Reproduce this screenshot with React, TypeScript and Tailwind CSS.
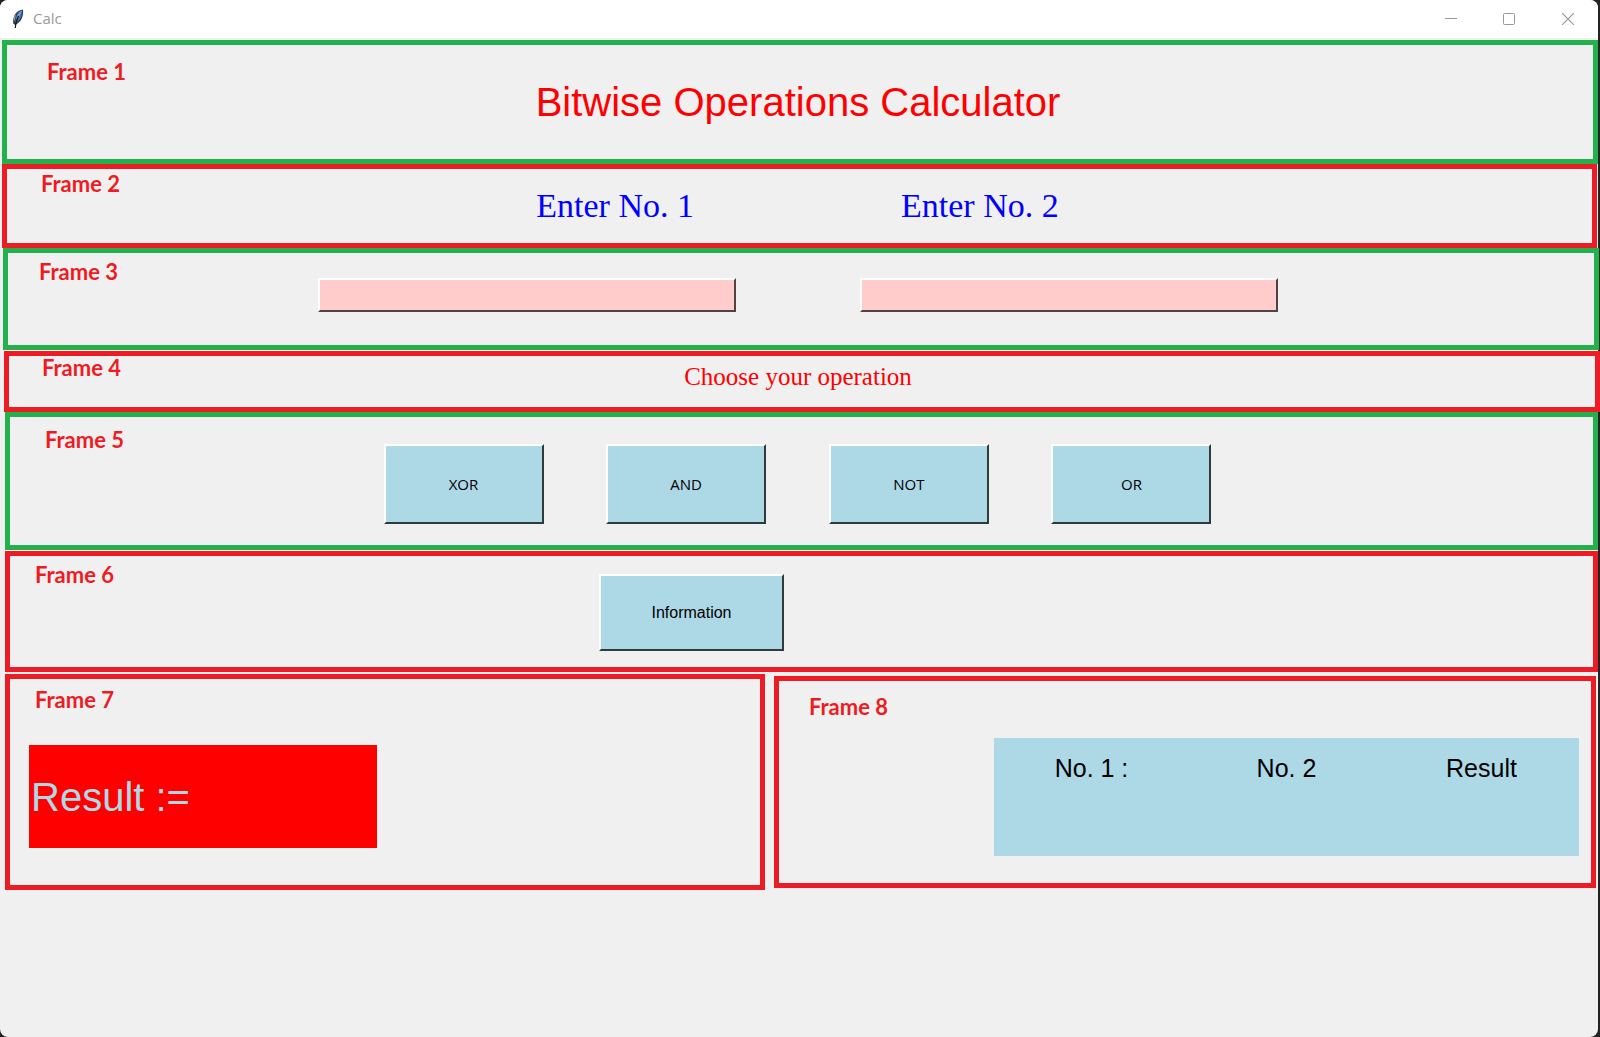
import type { ReactNode } from "react";

const OPERATIONS = ["XOR", "AND", "NOT", "OR"];

const BEVEL = "border-2 border-t-white border-l-white border-r-[#2f3a3d] border-b-[#2f3a3d]";

function Frame({
  label,
  frameClass,
  labelClass,
  contentClass,
  children,
}: {
  label: string;
  frameClass: string;
  labelClass: string;
  contentClass: string;
  children: ReactNode;
}) {
  return (
    <section className={`grid grid-cols-1 border-5 bg-[#f0f0f0] ${frameClass}`}>
      <h2
        className={`col-start-1 row-start-1 self-start justify-self-start font-['Lato',sans-serif] text-[22px] leading-6 font-bold text-[#ed1c24] ${labelClass}`}
      >
        {label}
      </h2>
      <div className={`col-start-1 row-start-1 flex ${contentClass}`}>{children}</div>
    </section>
  );
}

function FeatherIcon() {
  return (
    <svg className="h-5 w-3" viewBox="0 0 12 20" aria-hidden="true">
      <path
        d="M11 .5C8 .6 4.500 2.500 2.600 6 1.200 9 .900 12 1.200 14.500L3 16C5.500 15 8 13 9.300 10.500 10.700 8 11.500 4 11 .5Z"
        fill="#39424d"
      />
      <path d="M10.200 1.300C7.500 1.800 5 4.500 4 8L3 14C5.500 13 8.500 10 9.300 7Z" fill="#3f74b8" />
      <path d="M9.600 1.800C7 3.200 5.400 6 4.600 9.500L6 9C7.700 7 9 4.500 9.600 1.800Z" fill="#6fa3df" />
      <path d="M2.200 7.500 1.700 12.500 2.900 10.500 4 5.200Z" fill="#9aa1a8" />
      <path d="M6.500 7C5 10 3.500 13.500 3.200 19" fill="none" stroke="#151515" strokeWidth="1.200" />
    </svg>
  );
}

function TitleBar() {
  return (
    <header className="flex h-[38px] items-center bg-white pl-3 text-[#999999]">
      <FeatherIcon />
      <h1 className="ml-[9px] flex-1 pb-[2px] font-['Open_Sans',sans-serif] text-[15px] leading-5">Calc</h1>
      <button type="button" aria-label="Minimize" className="flex h-full w-[58px] items-center justify-center">
        <svg className="size-3" viewBox="0 0 12 12" fill="none" stroke="currentColor">
          <path d="M0 5.500H12" />
        </svg>
      </button>
      <button type="button" aria-label="Maximize" className="flex h-full w-[58px] items-center justify-center">
        <svg className="size-3" viewBox="0 0 12 12" fill="none" stroke="currentColor">
          <rect x="0.500" y="0.500" width="11" height="11" rx="1" />
        </svg>
      </button>
      <button type="button" aria-label="Close" className="flex h-full w-[60px] items-center justify-center">
        <svg className="size-3" viewBox="0 0 12 12" fill="none" stroke="currentColor" strokeWidth="1.200">
          <path d="M0 0 12 12M12 0 0 12" />
        </svg>
      </button>
    </header>
  );
}

export default function App() {
  return (
    <div className="min-h-screen overflow-x-hidden bg-[#222222] pr-[2px]">
      <div className="flex min-h-screen flex-col rounded-lg bg-[#f0f0f0]">
        <div className="overflow-hidden rounded-t-lg">
          <TitleBar />
        </div>
        <main className="mt-[2px] flex flex-col">
          <Frame
            label="Frame 1"
            frameClass="ml-[2px] border-[#22b14c]"
            labelClass="mt-[15px] ml-10"
            contentClass="justify-center pt-[27px] pr-[4px] pb-[27px]"
          >
            <p className="font-['Liberation_Sans',sans-serif] text-[40px] leading-[60px] text-[#ff0000]">
              Bitwise Operations Calculator
            </p>
          </Frame>

          <Frame
            label="Frame 2"
            frameClass="mr-px ml-[2px] border-[#ed1c24]"
            labelClass="mt-[3px] ml-[34px]"
            contentClass="justify-center gap-[207px] pt-[17px] pr-[4px] pb-[17px] font-['Liberation_Serif',serif] text-[34px] leading-10 text-[#0000ff]"
          >
            <label htmlFor="number-1">Enter No. 1</label>
            <label htmlFor="number-2">Enter No. 2</label>
          </Frame>

          <Frame
            label="Frame 3"
            frameClass="-mr-px ml-[3px] border-[#22b14c]"
            labelClass="mt-[7px] ml-[31px]"
            contentClass="justify-center gap-[124px] pt-[25px] pr-[6px] pb-[33px]"
          >
            <input
              id="number-1"
              type="text"
              className="h-[34px] w-[418px] border-2 border-t-white border-r-[#4f4343] border-b-[#4f4343] border-l-white bg-[#ffcccb] px-1 font-['Liberation_Sans',sans-serif] text-base"
            />
            <input
              id="number-2"
              type="text"
              className="h-[34px] w-[418px] border-2 border-t-white border-r-[#4f4343] border-b-[#4f4343] border-l-white bg-[#ffcccb] px-1 font-['Liberation_Sans',sans-serif] text-base"
            />
          </Frame>

          <Frame
            label="Frame 4"
            frameClass="mt-px -mr-[2px] ml-1 border-[#ed1c24]"
            labelClass="ml-[33px]"
            contentClass="justify-center pt-[5px] pr-[8px] pb-[14px]"
          >
            <p className="font-['Liberation_Serif',serif] text-[25px] leading-8 text-[#ff0000]">
              Choose your operation
            </p>
          </Frame>

          <Frame
            label="Frame 5"
            frameClass="ml-[5px] border-[#22b14c]"
            labelClass="mt-[11px] ml-[35px]"
            contentClass="justify-center pt-[27px] pr-[8px] pb-[21px]"
          >
            <div className="flex w-[828px] justify-between">
              {OPERATIONS.map((name) => (
                <button
                  key={name}
                  type="button"
                  className={`h-20 w-40 bg-[#add8e6] pb-px font-['Open_Sans',sans-serif] text-[15px] leading-5 text-black ${BEVEL}`}
                >
                  {name}
                </button>
              ))}
            </div>
          </Frame>

          <Frame
            label="Frame 6"
            frameClass="mt-px ml-[5px] border-[#ed1c24]"
            labelClass="mt-[7px] ml-[25px]"
            contentClass="justify-center pt-[18px] pr-[220px] pb-4"
          >
            <button
              type="button"
              className={`h-[77px] w-[185px] bg-[#add8e6] pt-px font-['Liberation_Sans',sans-serif] text-base text-black ${BEVEL}`}
            >
              Information
            </button>
          </Frame>

          <div className="mt-[2px] mr-[2px] ml-[5px] grid grid-cols-[minmax(0,760fr)_minmax(0,822fr)] gap-[9px]">
            <Frame
              label="Frame 7"
              frameClass="border-[#ed1c24]"
              labelClass="mt-[9px] ml-[25px]"
              contentClass="pt-[66px] pb-[37px] pl-[19px]"
            >
              <output className="flex h-[103px] w-[348px] items-center bg-[#ff0000] pl-[2px] font-['Liberation_Sans',sans-serif] text-[40px] leading-[60px] text-[#add8e6]">
                Result :=
              </output>
            </Frame>

            <Frame
              label="Frame 8"
              frameClass="my-[2px] border-[#ed1c24]"
              labelClass="mt-[14px] ml-[30px]"
              contentClass="justify-end pt-[57px] pr-3 pb-[27px]"
            >
              <div className="h-[118px] w-[585px] bg-[#add8e6] pt-[14px]">
                <table className="w-full table-fixed font-['Liberation_Sans',sans-serif] text-[25px] leading-8 text-black">
                  <thead>
                    <tr>
                      <th scope="col" className="p-0 font-normal">No. 1 :</th>
                      <th scope="col" className="p-0 font-normal">No. 2</th>
                      <th scope="col" className="p-0 font-normal">Result</th>
                    </tr>
                  </thead>
                </table>
              </div>
            </Frame>
          </div>
        </main>
      </div>
    </div>
  );
}
